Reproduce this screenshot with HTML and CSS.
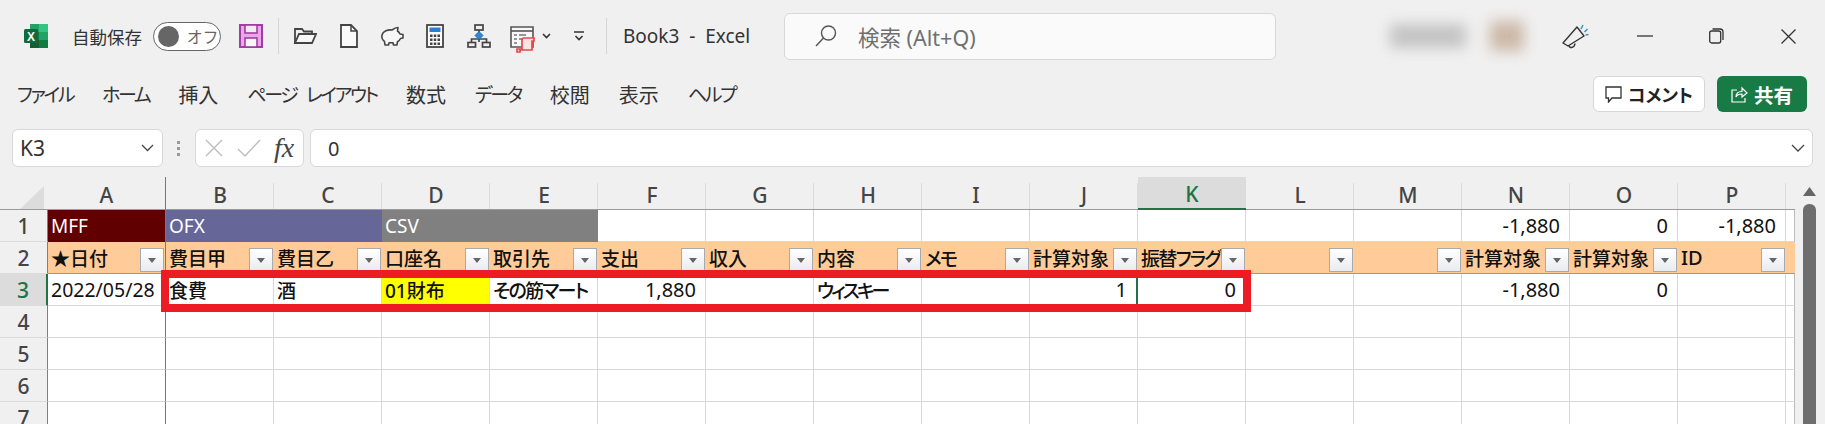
FILE: index.html
```html
<!DOCTYPE html>
<html lang="ja">
<head>
    <meta charset="UTF-8">
    <title>Book3 - Excel</title>
    <link rel="stylesheet" href="styles.css">
</head>
<body>

<!-- title bar -->
<header class="titlebar">
    <svg class="logo" width="24" height="24" viewBox="0 0 24 24">
        <rect x="6" y="0" width="9" height="8" fill="#21a366"/>
        <rect x="15" y="0" width="9" height="8" fill="#33c481"/>
        <rect x="6" y="8" width="9" height="8" fill="#107c41"/>
        <rect x="15" y="8" width="9" height="8" fill="#21a366"/>
        <rect x="6" y="16" width="9" height="8" fill="#185c37"/>
        <rect x="15" y="16" width="9" height="8" fill="#107c41"/>
        <rect x="0" y="5" width="14" height="14" rx="1.5" fill="#0e6b3a"/>
        <text x="7" y="16.5" text-anchor="middle" class="logo-x">X</text>
    </svg>
    <span class="autosave">自動保存</span>
    <div class="toggle"><span class="knob"></span><span class="toggle-text">オフ</span></div>
    <svg class="save" width="24" height="24" viewBox="0 0 24 24">
        <rect x="1" y="1" width="22" height="22" fill="#e9a6e8" stroke="#a03ca2" stroke-width="2"/>
        <rect x="6" y="1" width="12" height="8" fill="#f3e9f3" stroke="#a03ca2" stroke-width="1.6"/>
        <rect x="6" y="14" width="12" height="9" fill="#fbf3fb" stroke="#a03ca2" stroke-width="1.6"/>
    </svg>
    <span class="sep sep-first"></span>
    <svg class="qat folder" width="24" height="18" viewBox="0 0 24 18" fill="none" stroke="#444" stroke-width="1.8">
        <path d="M2 16V2h7l2 2.5h8V7"/>
        <path d="M2 16L6 7h17l-4 9z" fill="#f7f7f7"/>
    </svg>
    <svg class="qat doc" width="18" height="24" viewBox="0 0 18 24">
        <path d="M1 1h10l6 6v16H1z" fill="#fafafa" stroke="#444" stroke-width="1.8"/>
        <path d="M11 1v6h6" fill="none" stroke="#444" stroke-width="1.5"/>
    </svg>
    <svg class="qat pig" width="24" height="20" viewBox="0 0 24 20" fill="#f7f7f7" stroke="#444" stroke-width="1.6" stroke-linejoin="round">
        <path d="M2 9C3 5 8 3.5 12 4c2-1.500 4-2.500 6-2.500L17.500 5c1.300 1 2.100 2 2.500 3l3 .5V12l-2.500.5c-.7 1.500-1.700 2.500-3 3.200L17 19h-3.500l-.5-2.200H9L8.500 19H5l-.5-3.500C2.500 14 1.500 11.500 2 9z"/>
    </svg>
    <svg class="qat calc" width="18" height="24" viewBox="0 0 18 24">
        <rect x="1" y="1" width="16" height="22" fill="#fbfbfb" stroke="#444" stroke-width="1.800"/>
        <rect x="3.500" y="3.500" width="11" height="4.500" fill="#2b7cd3"/>
        <path d="M4 10.500h2.500V13H4zM7.750 10.500h2.500V13h-2.500zM11.500 10.500H14V13h-2.500zM4 14.500h2.500V17H4zM7.750 14.500h2.500V17h-2.500zM11.500 14.500H14V17h-2.500zM4 18.500h2.500V21H4zM7.750 18.500h2.500V21h-2.500zM11.500 18.500H14V21h-2.500z" fill="#444"/>
    </svg>
    <svg class="qat flow" width="24" height="24" viewBox="0 0 24 24" fill="none" stroke="#444" stroke-width="1.700">
        <rect x="8" y="1" width="8" height="5"/>
        <path d="M12 6v3M12 15v3M4.500 18v-3h15v3" />
        <rect x="1" y="18.500" width="7.500" height="4.500"/>
        <rect x="15.500" y="18.500" width="7.500" height="4.500"/>
        <path d="M12 7.500l4 4-4 4-4-4z" fill="#2b88d8" stroke="#2b6fb8" stroke-width="1"/>
    </svg>
    <svg class="qat report" width="26" height="28" viewBox="0 0 26 28">
        <path d="M1 2h22v20H1z" fill="#f8f8f8" stroke="#555" stroke-width="1.600"/>
        <path d="M1 6h22" stroke="#555" stroke-width="1.600"/>
        <path d="M4 10h3M9 10h7M4 14h3M9 14h3M4 18h3" stroke="#777" stroke-width="1.500"/>
        <path d="M14 13h10v3h-2v9H10v2H7v-3h5V15c0-1 1-2 2-2z" fill="#fde4e4" stroke="#e5484d" stroke-width="1.700"/>
    </svg>
    <svg class="chev" width="9" height="6" viewBox="0 0 9 6" fill="none" stroke="#333" stroke-width="1.600"><path d="M1 1l3.500 3.500L8 1"/></svg>
    <svg class="more" width="10" height="10" viewBox="0 0 10 10" fill="none" stroke="#333" stroke-width="1.600"><path d="M0 1h10M1.500 5L5 8.500 8.500 5"/></svg>
    <span class="sep sep-last"></span>
    <span class="doc-title">Book3&nbsp; - &nbsp;Excel</span>
    <div class="search">
        <svg width="22" height="22" viewBox="0 0 22 22" fill="none" stroke="#555" stroke-width="1.400"><circle cx="13.500" cy="8" r="7"/><path d="M8.500 13L1 21"/></svg>
        <span class="search-text">検索 (Alt+Q)</span>
    </div>
    <div class="account"><span class="account-name"></span><span class="account-pic"></span></div>
    <svg class="feedback" width="27" height="25" viewBox="0 0 27 25" fill="none">
        <path d="M15 3l7 9L6 22l-5-3z" stroke="#333" stroke-width="1.400" stroke-linejoin="round"/>
        <path d="M7 21.500c0 3 5.500 3 6-2" stroke="#333" stroke-width="1.400"/>
        <path d="M19 5l2-4M22.500 8l3-3M23.500 11l3-.5" stroke="#3a96c8" stroke-width="1.600"/>
    </svg>
    <svg class="win-min" width="16" height="2" viewBox="0 0 16 2"><path d="M0 1h16" stroke="#333" stroke-width="1.300"/></svg>
    <svg class="win-max" width="15" height="16" viewBox="0 0 15 16" fill="none" stroke="#333" stroke-width="1.300"><rect x=".7" y="3" width="11" height="12" rx="2"/><path d="M3.500 1h7.500a3 3 0 0 1 3 3v8"/></svg>
    <svg class="win-close" width="15" height="15" viewBox="0 0 15 15" stroke="#333" stroke-width="1.300"><path d="M.5.500l14 14M14.500.500l-14 14"/></svg>
</header>

<!-- ribbon tabs -->
<nav class="ribbon">
    <a class="tab kana">ファイル</a>
    <a class="tab kana">ホーム</a>
    <a class="tab">挿入</a>
    <a class="tab kana">ページ レイアウト</a>
    <a class="tab">数式</a>
    <a class="tab kana">データ</a>
    <a class="tab">校閲</a>
    <a class="tab">表示</a>
    <a class="tab kana">ヘルプ</a>
    <button class="btn-comment">
        <svg width="17" height="17" viewBox="0 0 17 17" fill="none" stroke="#333" stroke-width="1.300"><path d="M1 1h15v11H7l-3.500 4v-4H1z"/></svg>
        コメント
    </button>
    <button class="btn-share">
        <svg width="17" height="17" viewBox="0 0 17 17" fill="none" stroke="#fff" stroke-width="1.200"><path d="M6 4H1v12h13v-4"/><path d="M5 11c0-4 3-5.500 6-5.500V2l5 5-5 4V8c-3 0-5 1-6 3z"/></svg>
        共有
    </button>
</nav>

<!-- formula bar -->
<section class="formula-bar">
    <div class="name-box">
        <span>K3</span>
        <svg width="13" height="8" viewBox="0 0 13 8" fill="none" stroke="#444" stroke-width="1.300"><path d="M1 1l5.500 5.500L12 1"/></svg>
    </div>
    <div class="grip"><i></i><i></i><i></i></div>
    <div class="fx-box">
        <svg width="18" height="18" viewBox="0 0 18 18" stroke="#bdbdbd" stroke-width="1.400"><path d="M1 1l16 16M17 1L1 17"/></svg>
        <svg width="24" height="18" viewBox="0 0 24 18" fill="none" stroke="#bdbdbd" stroke-width="1.400"><path d="M1 10l7 7L23 1"/></svg>
        <span class="fx">fx</span>
    </div>
    <div class="formula-input">
        <span>0</span>
        <svg width="14" height="8" viewBox="0 0 14 8" fill="none" stroke="#444" stroke-width="1.300"><path d="M1 1l6 6 6-6"/></svg>
    </div>
</section>

<!-- worksheet -->
<main class="sheet">
    <table class="grid">
        <colgroup>
            <col class="w-head"><col class="w-a">
            <col class="w-c"><col class="w-c"><col class="w-c"><col class="w-c"><col class="w-c"><col class="w-c"><col class="w-c"><col class="w-c"><col class="w-c"><col class="w-c"><col class="w-c"><col class="w-c"><col class="w-c"><col class="w-c"><col class="w-c">
            <col class="w-q">
        </colgroup>
        <tr class="col-heads">
            <th class="corner"><svg width="24" height="23" viewBox="0 0 24 23"><path d="M24 0v23H0z" fill="#dcdcdc"/></svg></th>
            <th class="freeze">A</th><th>B</th><th>C</th><th>D</th><th>E</th><th>F</th><th>G</th><th>H</th><th>I</th><th>J</th><th class="on">K</th><th>L</th><th>M</th><th>N</th><th>O</th><th>P</th><th class="stub"></th>
        </tr>
        <tr>
            <th class="row-head">1</th>
            <td class="band-mff freeze">MFF</td>
            <td class="band-ofx" colspan="2">OFX</td>
            <td class="band-csv" colspan="2">CSV</td>
            <td></td><td></td><td></td><td></td><td></td><td></td><td></td><td></td>
            <td class="num">-1,880</td><td class="num">0</td><td class="num">-1,880</td><td></td>
        </tr>
        <tr class="filters">
            <th class="row-head">2</th>
            <td class="freeze"><div class="f"><span>★日付</span><b></b></div></td>
            <td><div class="f"><span>費目甲</span><b></b></div></td>
            <td><div class="f"><span>費目乙</span><b></b></div></td>
            <td><div class="f"><span>口座名</span><b></b></div></td>
            <td><div class="f"><span>取引先</span><b></b></div></td>
            <td><div class="f"><span>支出</span><b></b></div></td>
            <td><div class="f"><span>収入</span><b></b></div></td>
            <td><div class="f"><span>内容</span><b></b></div></td>
            <td><div class="f"><span class="tight">メモ</span><b></b></div></td>
            <td><div class="f"><span>計算対象</span><b></b></div></td>
            <td><div class="f"><span class="tight">振替フラグ</span><b></b></div></td>
            <td><div class="f"><span></span><b></b></div></td>
            <td><div class="f"><span></span><b></b></div></td>
            <td><div class="f"><span>計算対象</span><b></b></div></td>
            <td><div class="f"><span>計算対象</span><b></b></div></td>
            <td><div class="f"><span class="id">ID</span><b></b></div></td>
            <td></td>
        </tr>
        <tr class="data">
            <th class="row-head on">3</th>
            <td class="freeze date">2022/05/28</td>
            <td>食費</td><td>酒</td><td class="yellow">01財布</td><td class="tight">その筋マート</td>
            <td class="num">1,880</td><td></td><td class="tighter">ウィスキー</td><td></td><td class="num active-left">1</td><td class="num">0</td>
            <td></td><td></td><td class="num">-1,880</td><td class="num">0</td><td></td><td></td>
        </tr>
        <tr><th class="row-head">4</th><td class="freeze"></td><td></td><td></td><td></td><td></td><td></td><td></td><td></td><td></td><td></td><td></td><td></td><td></td><td></td><td></td><td></td><td></td></tr>
        <tr><th class="row-head">5</th><td class="freeze"></td><td></td><td></td><td></td><td></td><td></td><td></td><td></td><td></td><td></td><td></td><td></td><td></td><td></td><td></td><td></td><td></td></tr>
        <tr><th class="row-head">6</th><td class="freeze"></td><td></td><td></td><td></td><td></td><td></td><td></td><td></td><td></td><td></td><td></td><td></td><td></td><td></td><td></td><td></td><td></td></tr>
        <tr><th class="row-head">7</th><td class="freeze"></td><td></td><td></td><td></td><td></td><td></td><td></td><td></td><td></td><td></td><td></td><td></td><td></td><td></td><td></td><td></td><td></td></tr>
    </table>
    <div class="highlight"></div>
    <div class="scrollbar">
        <svg width="13" height="9" viewBox="0 0 13 9"><path d="M6.500 0L13 9H0z" fill="#666"/></svg>
        <span class="thumb"></span>
    </div>
</main>

</body>
</html>
```

FILE: styles.css
```css
* {
    box-sizing: border-box;
}

html, body {
    height: 424px;
    margin: 0;
    overflow: hidden;
}

body {
    background: #f0f0f0;
    color: #333;
    font-family: "Noto Sans", "Noto Sans CJK JP", sans-serif;
    font-feature-settings: "palt";
}

svg {
    display: block;
    flex: none;
}

/* title bar */
.titlebar {
    display: flex;
    align-items: center;
    height: 72px;
    padding-left: 24px;
}

.logo-x {
    fill: #fff;
    font: bold 12px "Liberation Sans", sans-serif;
}

.autosave {
    margin-left: 24px;
    width: 72px;
    font-size: 17.500px;
    white-space: nowrap;
}

.toggle {
    display: flex;
    align-items: center;
    width: 68px;
    height: 29px;
    margin-left: 9px;
    padding-left: 4px;
    background: #fff;
    border: 1px solid #666;
    border-radius: 15px;
}

.knob {
    width: 21px;
    height: 21px;
    background: #666;
    border-radius: 50%;
}

.toggle-text {
    margin-left: 8px;
    color: #666;
    font-size: 16px;
    letter-spacing: 2px;
}

.save {
    margin-left: 18px;
}

.sep {
    width: 1px;
    height: 36px;
    background: #d6d6d6;
}

.sep-first {
    margin-left: 15px;
}

.folder {
    margin-left: 14px;
}

.doc {
    margin-left: 23px;
}

.pig {
    margin-left: 22px;
}

.calc {
    margin-left: 22px;
}

.flow {
    margin-left: 23px;
}

.report {
    margin-left: 19px;
    margin-top: 5px;
}

.chev {
    margin-left: 6px;
}

.more {
    margin-left: 23px;
}

.sep-last {
    margin-left: 22px;
}

.doc-title {
    width: 147px;
    margin-left: 16px;
    font-size: 19px;
    white-space: nowrap;
}

.search {
    display: flex;
    align-items: center;
    gap: 21px;
    width: 492px;
    height: 47px;
    margin-left: 14px;
    padding-left: 30px;
    background: #fafafa;
    border: 1px solid #d8d8d8;
    border-radius: 6px;
}

.search-text {
    color: #707070;
    font-size: 21.500px;
}

.account {
    display: flex;
    align-items: center;
    gap: 24px;
    margin-left: 114px;
    filter: blur(7px);
}

.account-name {
    width: 76px;
    height: 24px;
    background: #c4c4c4;
}

.account-pic {
    width: 34px;
    height: 30px;
    background: #cdb9a8;
}

.feedback {
    margin-left: 38px;
}

.win-min {
    margin-left: 48px;
}

.win-max {
    margin-left: 56px;
}

.win-close {
    margin-left: 57px;
}

/* ribbon tabs */
.ribbon {
    display: flex;
    align-items: center;
    gap: 29px;
    height: 44px;
    padding-left: 17px;
}

.tab {
    font-size: 20px;
    white-space: nowrap;
}

.tab.kana {
    font-size: 19px;
    letter-spacing: -2.400px;
    word-spacing: 7px;
}

.btn-comment, .btn-share {
    display: flex;
    align-items: center;
    justify-content: center;
    gap: 6px;
    height: 36px;
    padding: 0;
    border-radius: 6px;
    font-family: inherit;
    font-feature-settings: inherit;
    font-size: 18px;
    font-weight: 700;
}

.btn-comment {
    width: 112px;
    margin-left: auto;
    margin-right: -17px;
    background: #fff;
    border: 1px solid #d6d6d6;
    color: #222;
}

.btn-share {
    width: 90px;
    margin-right: 18px;
    background: #187a44;
    border: none;
    color: #fff;
    font-size: 19.500px;
}

/* formula bar */
.formula-bar {
    display: flex;
    align-items: center;
    height: 38px;
    margin-top: 13px;
    padding-left: 12px;
}

.name-box, .fx-box, .formula-input {
    display: flex;
    align-items: center;
    height: 38px;
    background: #fff;
    border: 1px solid #d8d8d8;
    border-radius: 6px;
    font-size: 20px;
}

.name-box {
    justify-content: space-between;
    width: 151px;
    padding: 0 8px 0 7px;
    font-size: 21px;
}

.grip {
    display: flex;
    flex-direction: column;
    gap: 3px;
    width: 32px;
    padding-left: 14px;
}

.grip i {
    width: 3px;
    height: 3px;
    background: #999;
}

.fx-box {
    width: 109px;
    padding-left: 9px;
}

.fx-box svg + svg {
    margin-left: 14px;
}

.fx {
    margin-left: 13px;
    color: #444;
    font: italic 28px "Liberation Serif", serif;
}

.formula-input {
    justify-content: space-between;
    width: 1503px;
    margin-left: 6px;
    padding: 0 7px 0 17px;
}

/* worksheet */
.sheet {
    position: relative;
    margin-top: 10px;
}

.grid {
    width: 1795px;
    border-collapse: separate;
    border-spacing: 0;
    table-layout: fixed;
    font-size: 19px;
}

.w-head {
    width: 48px;
}

.w-a {
    width: 118px;
}

.w-c {
    width: 108px;
}

.w-q {
    width: 9px;
}

.grid tr {
    height: 32px;
}

.grid td {
    padding: 0 0 0 3px;
    background: #fff;
    border-right: 1px solid #d8d8d8;
    border-bottom: 1px solid #d8d8d8;
    color: #111;
    white-space: nowrap;
    overflow: hidden;
}

.grid td:last-child {
    border-right: 1px solid #bcbcbc;
}

.col-heads {
    height: 33px !important;
}

.col-heads th {
    height: 33px;
    padding: 3px 0 0;
    background: linear-gradient(#dcdcdc, #dcdcdc) right 6px / 1px 100% no-repeat #f0f0f0;
    border-bottom: 1px solid #9a9a9a;
    color: #444;
    font-size: 21px;
    font-weight: 500;
}

.col-heads .corner {
    padding: 8px 0 0 20px;
    background: #f0f0f0;
}

.col-heads .on {
    background: #dcdcdc;
    border-bottom: 2px solid #217346;
    color: #217346;
}

.col-heads .stub {
    background: #f0f0f0;
}

.row-head {
    padding: 0;
    background: #f0f0f0;
    border-right: 1px solid #808080;
    border-bottom: 1px solid #dcdcdc;
    color: #444;
    font-size: 21px;
    font-weight: 500;
}

.row-head.on {
    background: #dcdcdc;
    border-right: 2px solid #217346;
    color: #217346;
}

.grid .freeze, .col-heads .freeze {
    border-right: 1px solid #777;
}

.col-heads .freeze {
    background: #f0f0f0;
}

.grid .band-mff {
    background: #600000;
    border-bottom: none;
    color: #fff;
}

.grid .band-ofx {
    background: #666699;
    border-right: none;
    border-bottom: none;
    color: #fff;
}

.grid .band-csv {
    background: #808080;
    border-right: none;
    border-bottom: none;
    color: #fff;
}

.grid .num {
    padding-right: 9px;
    font-size: 20px;
    text-align: right;
}

.grid .date {
    font-size: 19.500px;
}

.grid .yellow {
    background: #ffff00;
}

.grid .active-left {
    border-right: 2px solid #217346;
}

.grid .tight {
    letter-spacing: -1.700px;
}

.grid .tighter {
    letter-spacing: -3px;
}

/* autofilter row */
.filters td {
    padding: 0;
    background: #ffcc99 !important;
    border-right: none !important;
    border-bottom: 1px solid #999 !important;
}

.filters .freeze {
    border-right: 1px solid #777 !important;
}

.f {
    display: flex;
    align-items: center;
    height: 31px;
    padding: 0 1px 0 3px;
    font-weight: 500;
}

.f span {
    flex: 1;
    min-width: 0;
    overflow: hidden;
}

.f .id {
    font-size: 20px;
}

.f b {
    position: relative;
    flex: none;
    width: 24px;
    height: 24px;
    margin-top: 4px;
    background: linear-gradient(#fff, #e8ebef);
    border: 1px solid #a9a9a9;
}

.f b::after {
    content: "";
    position: absolute;
    left: 7px;
    top: 9px;
    border: 4px solid transparent;
    border-top: 5px solid #666;
    border-bottom: none;
}

.data td {
    font-weight: 500;
}

.data .num, .data .date {
    font-weight: 400;
}

/* red box drawn over row 3 */
.highlight {
    position: absolute;
    left: 161px;
    top: 93px;
    width: 1090px;
    height: 42px;
    border: 8px solid #ed1c24;
}

.scrollbar {
    position: absolute;
    left: 1803px;
    top: 10px;
    display: flex;
    flex-direction: column;
    gap: 8px;
}

.thumb {
    width: 13px;
    height: 300px;
    background: #6e6e6e;
    border-radius: 6px;
}
```
